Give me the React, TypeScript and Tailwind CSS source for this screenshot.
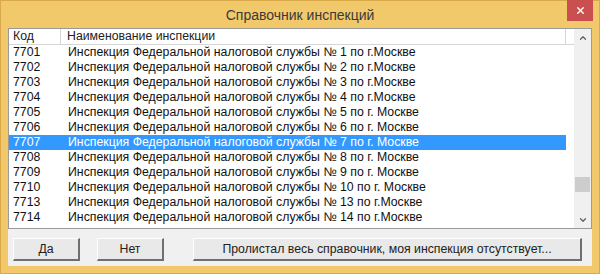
import { X, ChevronUp, ChevronDown } from "lucide-react";

const rows = [
  { code: "7701", name: "Инспекция Федеральной налоговой службы № 1 по г.Москве" },
  { code: "7702", name: "Инспекция Федеральной налоговой службы № 2 по г.Москве" },
  { code: "7703", name: "Инспекция Федеральной налоговой службы № 3 по г.Москве" },
  { code: "7704", name: "Инспекция Федеральной налоговой службы № 4 по г.Москве" },
  { code: "7705", name: "Инспекция Федеральной налоговой службы № 5 по г. Москве" },
  { code: "7706", name: "Инспекция Федеральной налоговой службы № 6 по г. Москве" },
  { code: "7707", name: "Инспекция Федеральной налоговой службы № 7 по г. Москве" },
  { code: "7708", name: "Инспекция Федеральной налоговой службы № 8 по г. Москве" },
  { code: "7709", name: "Инспекция Федеральной налоговой службы № 9 по г. Москве" },
  { code: "7710", name: "Инспекция Федеральной налоговой службы № 10 по г. Москве" },
  { code: "7713", name: "Инспекция Федеральной налоговой службы № 13 по г.Москве" },
  { code: "7714", name: "Инспекция Федеральной налоговой службы № 14 по г.Москве" },
];

const WinButton = ({ label, className }: { label: string; className: string }) => (
  <button
    className={`h-[23px] bg-[#e9e9e9] border-t border-l border-t-white border-l-white border-r-2 border-b-2 border-r-[#6f6f6f] border-b-[#6f6f6f] text-[12.3px] text-[#222] ${className}`}
  >
    {label}
  </button>
);

export default function App() {
  return (
    <div
      className="w-[600px] h-[274px] bg-[#f1c96b] border border-[#d9a94a] flex flex-col text-black"
      style={{ fontFamily: "'Liberation Sans', Arial, sans-serif" }}
    >
      <div className="h-[27px] relative flex items-center justify-center">
        <span className="text-[14px] text-[#3a3a3a] mt-[1px]">Справочник инспекций</span>
        <div className="absolute right-[6px] top-[-1px] w-[26px] h-[21px] bg-[#c9504e] flex items-center justify-center">
          <X size={11} strokeWidth={3} className="text-white" />
        </div>
      </div>

      <div className="flex-1 mx-[7px] mb-[7px] bg-[#f0f0f0] flex flex-col">
        <div className="h-[201px] bg-white border border-[#9a9a9a] flex">
          <div className="flex-1 flex flex-col">
            <div className="h-[16px] flex text-[12.3px] leading-[15px] border-b border-[#d6d6d6] text-[#222]">
              <div className="w-[52px] pl-[4px] border-r border-[#d6d6d6]">Код</div>
              <div className="flex-1 pl-[6px] border-r border-[#d6d6d6]">Наименование инспекции</div>
              <div className="w-[8px]" />
            </div>
            {rows.map((r) => {
              const sel = r.code === "7707";
              return (
                <div
                  key={r.code}
                  className={`h-[15px] flex text-[12.3px] leading-[15px] mr-[8px] ${sel ? "bg-[#3399ff] text-white" : "text-[#111]"}`}
                >
                  <div className="w-[52px] pl-[4px]">{r.code}</div>
                  <div className="flex-1 pl-[7px] whitespace-nowrap">{r.name}</div>
                </div>
              );
            })}
          </div>
          <div className="w-[17px] bg-[#f0f0f0] flex flex-col items-center">
            <div className="h-[17px] flex items-center justify-center">
              <ChevronUp size={10} strokeWidth={3} className="text-[#606060]" />
            </div>
            <div className="flex-1 flex flex-col w-full">
              <div className="h-[131px]" />
              <div className="h-[15px] mx-[1px] bg-[#cdcdcd]" />
            </div>
            <div className="h-[17px] flex items-center justify-center">
              <ChevronDown size={10} strokeWidth={3} className="text-[#606060]" />
            </div>
          </div>
        </div>
        <div className="flex items-center mt-[9px] pl-[5px]">
          <WinButton label="Да" className="w-[67px]" />
          <WinButton label="Нет" className="w-[67px] ml-[17px]" />
          <WinButton label="Пролистал весь справочник, моя инспекция отсутствует..." className="w-[389px] ml-[29px]" />
        </div>
      </div>
    </div>
  );
}
